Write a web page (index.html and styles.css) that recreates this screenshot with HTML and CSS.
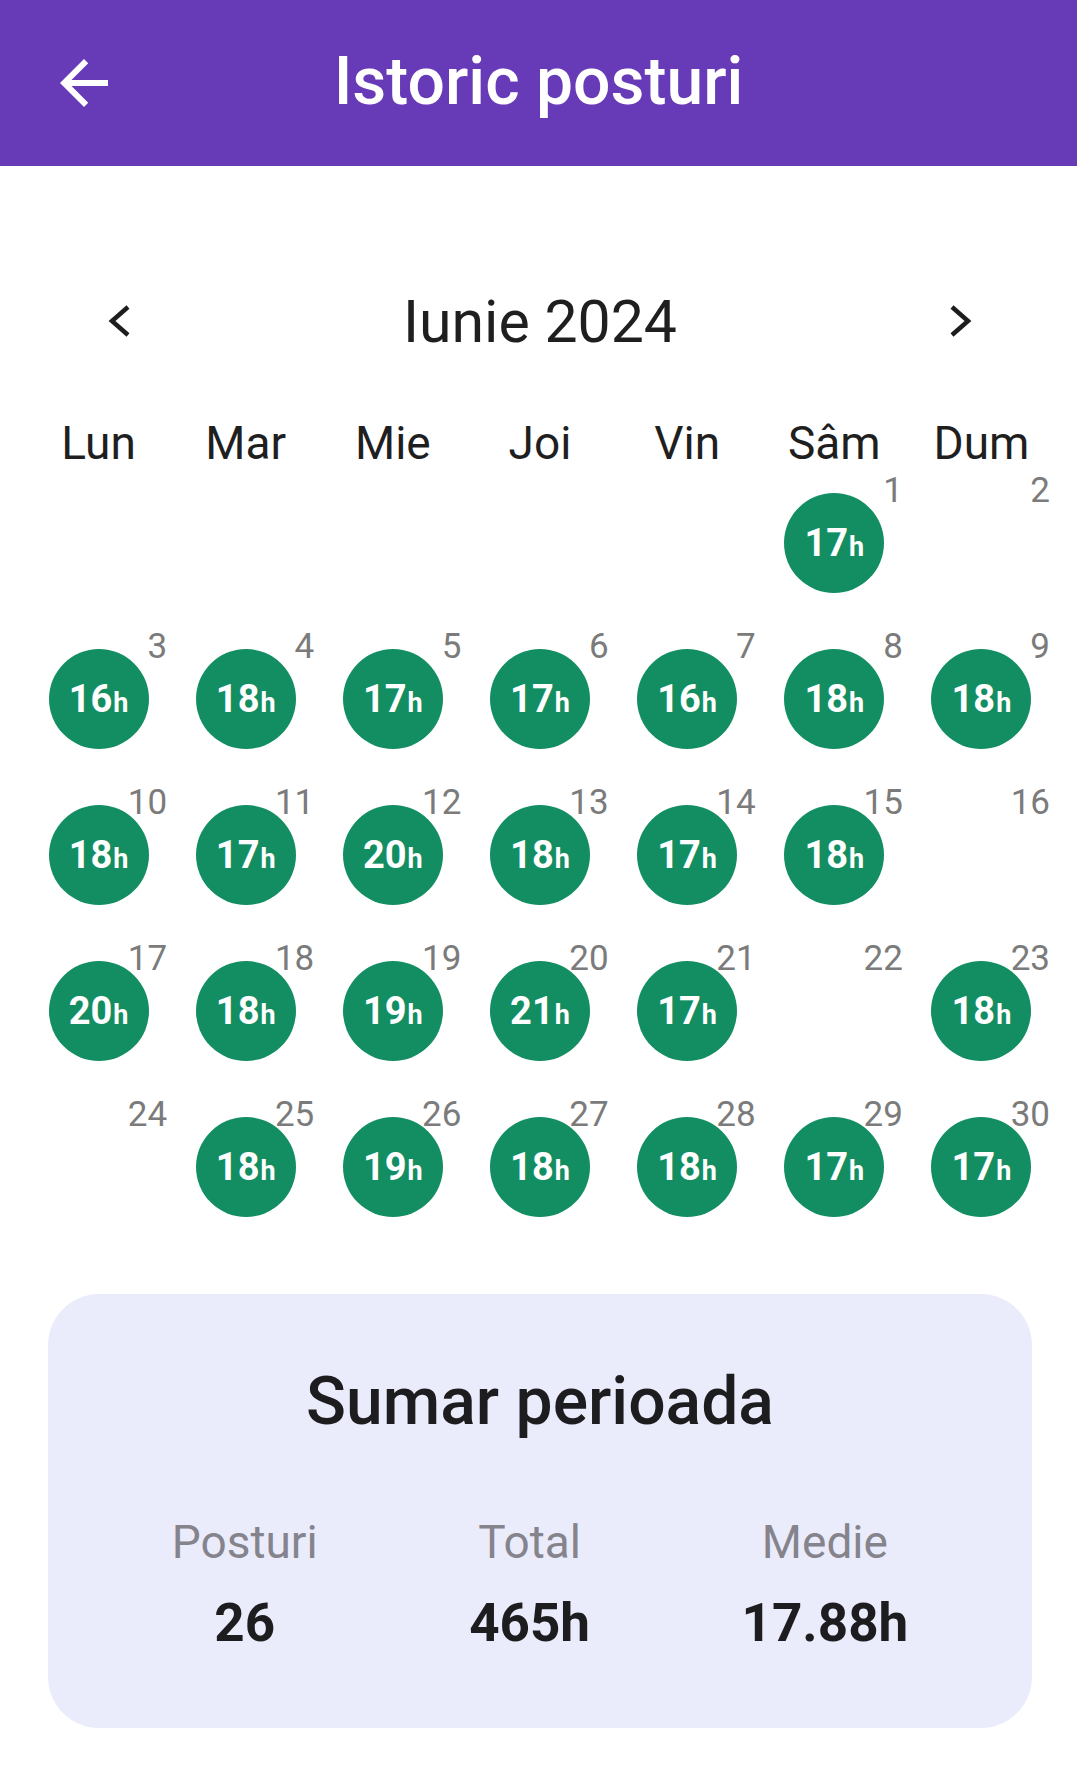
FILE: index.html
```html
<!DOCTYPE html>
<html lang="ro">
<head>
<meta charset="utf-8">
<title>Istoric posturi</title>
<link rel="stylesheet" href="styles.css">
</head>
<body>
<header class="topbar">
  <div class="topbar-left">
    <svg class="back-icon" viewBox="0 0 24 24" width="72" height="72" aria-hidden="true"><path d="M20 11H7.83l5.59-5.59L12 4l-8 8 8 8 1.41-1.41L7.83 13H20v-2z" fill="#fff"/></svg>
  </div>
  <h1 class="topbar-title">Istoric posturi</h1>
  <div></div>
</header>

<main class="content">
  <div class="month-nav">
    <svg class="chev" viewBox="0 0 64 64" width="64" height="64" aria-hidden="true"><polyline points="41,18 25,32 41,46" fill="none" stroke="#1d1d1d" stroke-width="4.5"/></svg>
    <div class="month-title">Iunie 2024</div>
    <svg class="chev" viewBox="0 0 64 64" width="64" height="64" aria-hidden="true"><polyline points="23,18 39,32 23,46" fill="none" stroke="#1d1d1d" stroke-width="4.5"/></svg>
  </div>

  <div class="weekdays">
    <div>Lun</div><div>Mar</div><div>Mie</div><div>Joi</div><div>Vin</div><div>Sâm</div><div>Dum</div>
  </div>

  <div class="calendar">
    <div class="cell"></div><div class="cell"></div><div class="cell"></div><div class="cell"></div><div class="cell"></div>
    <div class="cell"><span class="daynum">1</span><div class="fast">17<span class="unit">h</span></div></div>
    <div class="cell"><span class="daynum">2</span></div>

    <div class="cell"><span class="daynum">3</span><div class="fast">16<span class="unit">h</span></div></div>
    <div class="cell"><span class="daynum">4</span><div class="fast">18<span class="unit">h</span></div></div>
    <div class="cell"><span class="daynum">5</span><div class="fast">17<span class="unit">h</span></div></div>
    <div class="cell"><span class="daynum">6</span><div class="fast">17<span class="unit">h</span></div></div>
    <div class="cell"><span class="daynum">7</span><div class="fast">16<span class="unit">h</span></div></div>
    <div class="cell"><span class="daynum">8</span><div class="fast">18<span class="unit">h</span></div></div>
    <div class="cell"><span class="daynum">9</span><div class="fast">18<span class="unit">h</span></div></div>

    <div class="cell"><span class="daynum">10</span><div class="fast">18<span class="unit">h</span></div></div>
    <div class="cell"><span class="daynum">11</span><div class="fast">17<span class="unit">h</span></div></div>
    <div class="cell"><span class="daynum">12</span><div class="fast">20<span class="unit">h</span></div></div>
    <div class="cell"><span class="daynum">13</span><div class="fast">18<span class="unit">h</span></div></div>
    <div class="cell"><span class="daynum">14</span><div class="fast">17<span class="unit">h</span></div></div>
    <div class="cell"><span class="daynum">15</span><div class="fast">18<span class="unit">h</span></div></div>
    <div class="cell"><span class="daynum">16</span></div>

    <div class="cell"><span class="daynum">17</span><div class="fast">20<span class="unit">h</span></div></div>
    <div class="cell"><span class="daynum">18</span><div class="fast">18<span class="unit">h</span></div></div>
    <div class="cell"><span class="daynum">19</span><div class="fast">19<span class="unit">h</span></div></div>
    <div class="cell"><span class="daynum">20</span><div class="fast">21<span class="unit">h</span></div></div>
    <div class="cell"><span class="daynum">21</span><div class="fast">17<span class="unit">h</span></div></div>
    <div class="cell"><span class="daynum">22</span></div>
    <div class="cell"><span class="daynum">23</span><div class="fast">18<span class="unit">h</span></div></div>

    <div class="cell"><span class="daynum">24</span></div>
    <div class="cell"><span class="daynum">25</span><div class="fast">18<span class="unit">h</span></div></div>
    <div class="cell"><span class="daynum">26</span><div class="fast">19<span class="unit">h</span></div></div>
    <div class="cell"><span class="daynum">27</span><div class="fast">18<span class="unit">h</span></div></div>
    <div class="cell"><span class="daynum">28</span><div class="fast">18<span class="unit">h</span></div></div>
    <div class="cell"><span class="daynum">29</span><div class="fast">17<span class="unit">h</span></div></div>
    <div class="cell"><span class="daynum">30</span><div class="fast">17<span class="unit">h</span></div></div>
  </div>

  <section class="summary">
    <h2 class="summary-title">Sumar perioada</h2>
    <div class="stats">
      <div class="stat"><div class="stat-label">Posturi</div><div class="stat-value">26</div></div>
      <div class="stat"><div class="stat-label">Total</div><div class="stat-value">465h</div></div>
      <div class="stat"><div class="stat-label">Medie</div><div class="stat-value">17.88h</div></div>
    </div>
  </section>
</main>
</body>
</html>
```

FILE: styles.css
```css
* { box-sizing: border-box; }

html, body {
  margin: 0;
  padding: 0;
  background: #ffffff;
  font-family: Roboto, "Noto Sans", "Liberation Sans", sans-serif;
  color: #1e1e1e;
}

.topbar {
  height: 166px;
  background: #673ab7;
  display: grid;
  grid-template-columns: 1fr auto 1fr;
  align-items: center;
}

.topbar-left {
  display: flex;
  align-items: center;
  padding-left: 48px;
}

.back-icon {
  display: block;
}

.topbar-title {
  margin: 0;
  padding-bottom: 2px;
  font-size: 66px;
  font-weight: 500;
  color: #ffffff;
  line-height: 1.2;
}

.content {
  padding: 0 22px 0 25px;
}

.month-nav {
  margin-top: 123px;
  height: 64px;
  display: flex;
  align-items: center;
  justify-content: space-between;
  padding: 0 62px;
}

.chev {
  display: block;
}

.month-title {
  font-size: 59px;
  font-weight: 400;
  color: #1f1f1f;
}

.weekdays {
  margin-top: 68px;
  display: grid;
  grid-template-columns: repeat(7, 1fr);
  height: 44px;
  line-height: 44px;
  font-size: 46px;
  text-align: center;
  color: #1f1f1f;
}

.calendar {
  display: grid;
  grid-template-columns: repeat(7, 1fr);
  grid-auto-rows: 156px;
}

.cell {
  position: relative;
  display: flex;
  align-items: center;
  justify-content: center;
}

.daynum {
  position: absolute;
  top: 8px;
  right: 5px;
  font-size: 35px;
  line-height: 1;
  color: #7b7b7b;
}

.fast {
  width: 100px;
  height: 100px;
  border-radius: 50%;
  background: #138e62;
  color: #ffffff;
  display: flex;
  align-items: baseline;
  justify-content: center;
  padding-top: 28px;
  font-size: 38px;
  font-weight: 700;
  line-height: 1.2;
}

.unit {
  font-size: 27px;
  margin-left: 1px;
}

.summary {
  margin: 49px 23px 0;
  background: #ebecfb;
  border-radius: 51px;
  padding: 75px 48px 78px;
}

.summary-title {
  margin: 0;
  font-size: 66px;
  font-weight: 500;
  line-height: 1;
  text-align: center;
  color: #1d1d1f;
}

.stats {
  margin-top: 84px;
  display: flex;
  justify-content: space-around;
}

.stat {
  display: flex;
  flex-direction: column;
  align-items: center;
}

.stat-label {
  font-size: 46px;
  line-height: 1;
  color: #85848d;
}

.stat-value {
  margin-top: 32px;
  font-size: 53px;
  font-weight: 700;
  line-height: 1;
  color: #1d1c1f;
}
```
